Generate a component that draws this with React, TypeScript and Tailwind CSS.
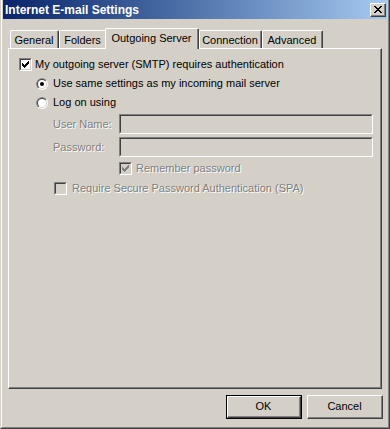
import React from "react";

const DIS = "text-[#808080] [text-shadow:1px_1px_0_#ffffff]";

function Sunken({ className = "", bg = "bg-white", children }: { className?: string; bg?: string; children?: React.ReactNode }) {
  return (
    <div className={`border-t border-l border-t-[#808080] border-l-[#808080] border-b border-r border-b-white border-r-white ${className}`}>
      <div className={`w-full h-full border-t border-l border-t-[#404040] border-l-[#404040] border-b border-r border-b-[#d4d0c8] border-r-[#d4d0c8] ${bg}`}>
        {children}
      </div>
    </div>
  );
}

function Raised({ className = "", children }: { className?: string; children?: React.ReactNode }) {
  return (
    <div className={`border-t border-l border-t-white border-l-white border-b border-r border-b-[#404040] border-r-[#404040] ${className}`}>
      <div className="w-full h-full border-b border-r border-b-[#808080] border-r-[#808080] flex items-center justify-center">
        {children}
      </div>
    </div>
  );
}

function CheckBox({ checked, disabled }: { checked?: boolean; disabled?: boolean }) {
  return (
    <Sunken className="w-[13px] h-[13px] shrink-0" bg={disabled ? "bg-[#d4d0c8]" : "bg-white"}>
      {checked && (
        <svg width="7" height="7" viewBox="0 0 7 7" className="block ml-[1px] mt-[1px]" shapeRendering="crispEdges">
          <path
            fill={disabled ? "#808080" : "#000000"}
            d="M6 0h1v1h-1z M5 1h2v1h-2z M0 2h1v1h-1z M4 2h3v1h-3z M0 3h2v1h-2z M3 3h3v1h-3z M0 4h5v1h-5z M1 5h3v1h-3z M2 6h1v1h-1z"
          />
        </svg>
      )}
    </Sunken>
  );
}

function Radio({ checked }: { checked?: boolean }) {
  const id = React.useId().replace(/:/g, "");
  return (
    <svg width="12" height="12" viewBox="0 0 12 12" className="block shrink-0">
      <defs>
        <clipPath id={`tl${id}`}>
          <path d="M0 0H12.5L0 12.5Z" />
        </clipPath>
      </defs>
      <circle cx="6" cy="6" r="6" fill="#ffffff" />
      <circle cx="6" cy="6" r="6" fill="#808080" clipPath={`url(#tl${id})`} />
      <circle cx="6" cy="6" r="5" fill="#d4d0c8" />
      <circle cx="6" cy="6" r="5" fill="#404040" clipPath={`url(#tl${id})`} />
      <circle cx="6" cy="6" r="4" fill="#ffffff" />
      {checked && <circle cx="6" cy="6" r="2" fill="#000000" />}
    </svg>
  );
}

function Tab({ label, w, selected }: { label: string; w: string; selected?: boolean }) {
  if (selected) {
    return (
      <div className={`${w} h-[21px] -ml-[2px] -mb-[1px] relative z-10 bg-[#d4d0c8] rounded-t-[2px] border-t border-l border-t-white border-l-white border-r border-r-[#404040]`}>
        <div className="w-full h-full border-r border-r-[#808080] flex items-center justify-center pb-[2px]">{label}</div>
      </div>
    );
  }
  return (
    <div className={`${w} h-[18px] rounded-t-[2px] border-t border-l border-t-white border-l-white border-r border-r-[#404040]`}>
      <div className="w-full h-full border-r border-r-[#808080] flex items-center justify-center pt-[1px]">{label}</div>
    </div>
  );
}

export default function App() {
  return (
    <div className="w-[390px] h-[429px] bg-[#d4d0c8] border-l border-l-[#d4d0c8] border-r border-b border-r-[#404040] border-b-[#404040] font-['Liberation_Sans',Arial,sans-serif] text-[11px] text-black leading-none select-none">
      <div className="h-full flex flex-col border-l border-l-white border-r border-b border-r-[#808080] border-b-[#808080] px-[1px] pb-[1px]">
        {/* Title bar */}
        <div className="h-[19px] shrink-0 flex items-center justify-between bg-gradient-to-r from-[#0a246a] to-[#a6caf0] pl-[2px] pr-[1px]">
          <span className="text-white font-bold text-[12px]">Internet E-mail Settings</span>
          <Raised className="w-[16px] h-[14px] bg-[#d4d0c8]">
            <svg width="8" height="7" viewBox="0 0 8 7" shapeRendering="crispEdges" className="block">
              <path
                fill="#000"
                d="M0 0h2v1h-2z M6 0h2v1h-2z M1 1h2v1h-2z M5 1h2v1h-2z M2 2h4v1h-4z M3 3h2v1h-2z M2 4h4v1h-4z M1 5h2v1h-2z M5 5h2v1h-2z M0 6h2v1h-2z M6 6h2v1h-2z"
              />
            </svg>
          </Raised>
        </div>

        {/* Tabs + panel */}
        <div className="mt-[9px] mx-[5px] flex flex-col">
          <div className="h-[20px] flex items-end pl-[2px]">
            <Tab label="General" w="w-[49px]" />
            <Tab label="Folders" w="w-[48px]" />
            <Tab label="Outgoing Server" w="w-[94px]" selected />
            <Tab label="Connection" w="w-[63px]" />
            <Tab label="Advanced" w="w-[61px]" />
          </div>
          <div className="h-[341px] border-t border-l border-t-white border-l-white border-r border-b border-r-[#404040] border-b-[#404040]">
            <div className="h-full border-r border-b border-r-[#808080] border-b-[#808080] pt-[6px] pl-[10px] pr-[7px] flex flex-col">
              <div className="h-[19px] flex items-center gap-[3px]">
                <CheckBox checked />
                <span>My outgoing server (SMTP) requires authentication</span>
              </div>
              <div className="h-[19px] flex items-center gap-[5px] pl-[17px]">
                <Radio checked />
                <span>Use same settings as my incoming mail server</span>
              </div>
              <div className="h-[19px] flex items-center gap-[5px] pl-[17px]">
                <Radio />
                <span>Log on using</span>
              </div>
              <div className="mt-[2px] h-[20px] flex items-center pl-[34px]">
                <span className={`w-[66px] shrink-0 ${DIS}`}>User Name:</span>
                <Sunken className="flex-1 h-[20px]" bg="bg-[#d4d0c8]" />
              </div>
              <div className="mt-[3px] h-[20px] flex items-center pl-[34px]">
                <span className={`w-[66px] shrink-0 ${DIS}`}>Password:</span>
                <Sunken className="flex-1 h-[20px]" bg="bg-[#d4d0c8]" />
              </div>
              <div className="h-[22px] flex items-center gap-[4px] pl-[100px]">
                <CheckBox checked disabled />
                <span className={DIS}>Remember password</span>
              </div>
              <div className="h-[18px] flex items-center gap-[5px] pl-[35px]">
                <CheckBox disabled />
                <span className={DIS}>Require Secure Password Authentication (SPA)</span>
              </div>
            </div>
          </div>
        </div>

        {/* Buttons */}
        <div className="mt-[6px] flex justify-end gap-[5px] pr-[4px]">
          <div className="w-[76px] h-[24px] border border-black">
            <Raised className="w-full h-full">OK</Raised>
          </div>
          <div className="w-[76px] h-[24px] mt-0">
            <Raised className="w-full h-full">Cancel</Raised>
          </div>
        </div>
      </div>
    </div>
  );
}
